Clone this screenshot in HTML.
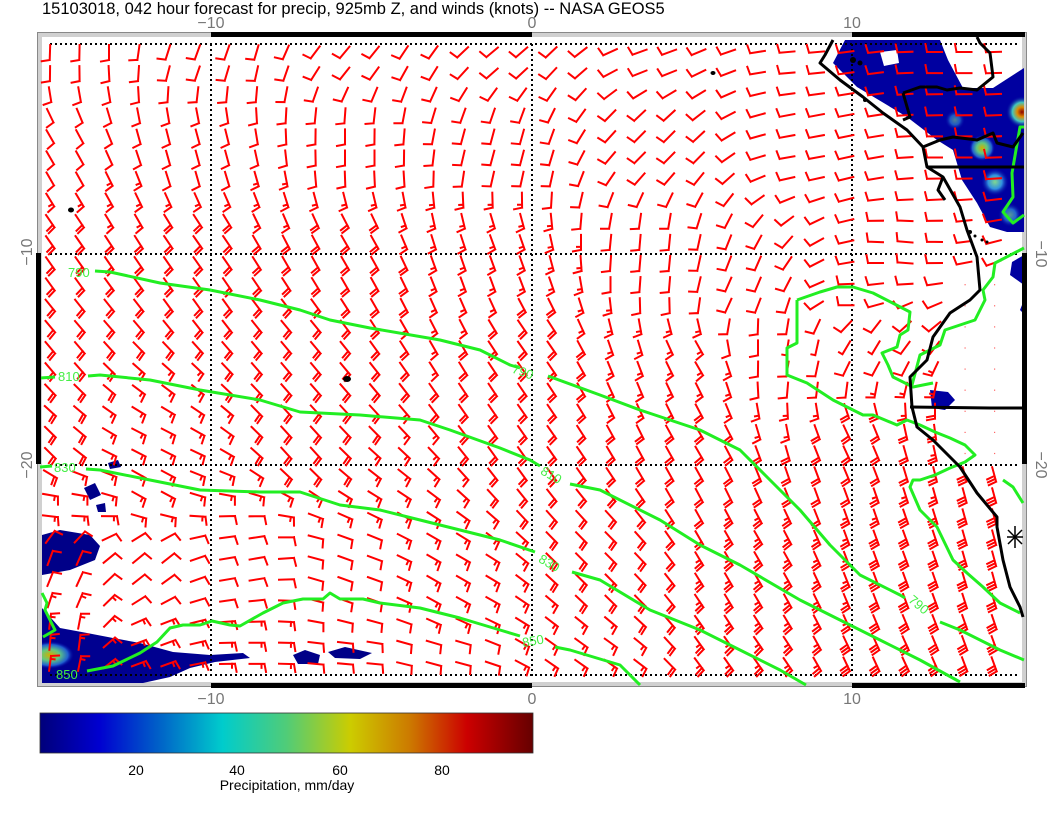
<!DOCTYPE html>
<html><head><meta charset="utf-8"><style>
html,body{margin:0;padding:0;background:#fff;width:1056px;height:816px;overflow:hidden}
svg{display:block}
text{font-family:"Liberation Sans",sans-serif}
</style></head><body>
<svg id="s" width="1056" height="816" viewBox="0 0 1056 816" xmlns="http://www.w3.org/2000/svg">
<defs>
<clipPath id="fr"><rect x="42" y="37" width="982" height="646"/></clipPath>
<linearGradient id="cb" x1="0" x2="1" y1="0" y2="0">
<stop offset="0" stop-color="#00007a"/><stop offset="0.12" stop-color="#0000d0"/><stop offset="0.24" stop-color="#0060c8"/><stop offset="0.37" stop-color="#00cccc"/><stop offset="0.5" stop-color="#50cc78"/><stop offset="0.63" stop-color="#cccc00"/><stop offset="0.75" stop-color="#cc7a00"/><stop offset="0.866" stop-color="#cc0000"/><stop offset="1" stop-color="#660000"/>
</linearGradient>
<radialGradient id="hot"><stop offset="0" stop-color="#8a0000"/><stop offset="0.3" stop-color="#dd8800"/><stop offset="0.6" stop-color="#40c8c0"/><stop offset="1" stop-color="#0000a0" stop-opacity="0"/></radialGradient>
<radialGradient id="yel"><stop offset="0" stop-color="#d0b000"/><stop offset="0.4" stop-color="#60c880"/><stop offset="0.75" stop-color="#2060d0"/><stop offset="1" stop-color="#0000a0" stop-opacity="0"/></radialGradient>
<radialGradient id="cy"><stop offset="0" stop-color="#80d890"/><stop offset="0.5" stop-color="#3090e0"/><stop offset="1" stop-color="#0000a0" stop-opacity="0"/></radialGradient>
</defs>
<text x="42" y="14" font-size="16.5" fill="#000">15103018, 042 hour forecast for precip, 925mb Z, and winds (knots) -- NASA GEOS5</text>
<rect x="37.5" y="32.5" width="989" height="654" fill="#fff" stroke="#888" stroke-width="1"/>
<rect x="40" y="35" width="984" height="649" fill="none" stroke="#d0d0d0" stroke-width="4"/>
<g clip-path="url(#fr)">
<path d="M833,63 L845,40 L940,40 L948,60 L963,88 L993,88 L1024,68 L1024,232 L1007,232 L990,227 L977,203 L962,180 L953,150 L937,140 L907,117 L857,87 Z" fill="#0000a0"/>
<path d="M880,52 L897,50 L899,63 L884,66 Z" fill="#fff"/>
<circle cx="1022" cy="112" r="16" fill="url(#hot)"/>
<circle cx="982" cy="148" r="13" fill="url(#yel)"/>
<circle cx="995" cy="182" r="14" fill="url(#cy)"/>
<circle cx="955" cy="120" r="10" fill="url(#cy)" opacity=".6"/>
<circle cx="1010" cy="215" r="12" fill="url(#cy)" opacity=".7"/>
<path d="M1024,255 L1012,262 L1010,275 L1024,285 Z" fill="#0000a0"/>
<path d="M1024,300 L1020,310 L1024,314 Z" fill="#0000a0"/>
<path d="M930,390 L948,392 L955,400 L945,410 L932,408 Z" fill="#0000a0"/>
<path d="M42,535 L60,530 L90,535 L100,546 L95,560 L70,570 L42,575 Z" fill="#000088"/>
<path d="M42,608 L60,628 L87,633 L113,638 L140,643 L173,652 L210,655 L243,653 L250,658 L215,662 L190,668 L170,677 L143,683 L42,683 Z" fill="#000090"/>
<ellipse cx="50" cy="655" rx="24" ry="14" fill="url(#yel)"/>
<path d="M293,655 L305,650 L320,655 L318,664 L298,664 Z" fill="#000088"/>
<path d="M328,652 L345,647 L372,653 L360,659 L335,658 Z" fill="#000088"/>
<path d="M108,463 L118,460 L121,467 L110,469 Z" fill="#000088"/>
<path d="M84,488 L95,483 L101,495 L90,500 Z" fill="#000088"/>
<path d="M96,505 L105,503 L106,512 L98,512 Z" fill="#000088"/>
</g>
<g stroke="#000" stroke-width="2" stroke-dasharray="2 3" fill="none">
<line x1="211" y1="44" x2="211" y2="676"/><line x1="532" y1="44" x2="532" y2="676"/><line x1="852" y1="44" x2="852" y2="676"/>
<line x1="50" y1="44" x2="1020" y2="44"/><line x1="50" y1="254" x2="1020" y2="254"/><line x1="50" y1="465" x2="1020" y2="465"/><line x1="50" y1="675" x2="1020" y2="675"/>
</g>
<g id="barbs" stroke="#ff0000" stroke-width="2" fill="none" stroke-linecap="square"></g>
<g stroke="#22ee22" stroke-width="3" fill="none" stroke-linejoin="round">
<polyline points="95,271 110,272 160,283 210,290 260,300 300,310 330,320 370,328 440,340 480,350 510,365 520,368"/>
<polyline points="548,376 600,395 640,410 700,430 740,450 770,480 800,510 830,545 860,575 900,595 905,598"/>
<polyline points="940,622 960,630 1000,650 1024,660"/>
<polyline points="40,378 55,377"/>
<polyline points="88,376 100,375 150,380 200,390 260,400 300,412 360,415 420,420 450,430 500,448 530,460 540,466"/>
<polyline points="570,484 600,490 660,520 700,545 740,565 800,600 840,620 880,640 920,660 960,682"/>
<polyline points="40,467 52,466"/>
<polyline points="86,469 100,470 150,480 200,490 260,492 300,492 340,505 380,510 420,520 460,530 500,540 535,552"/>
<polyline points="572,572 600,580 650,610 700,630 740,650 780,670 806,685"/>
<polyline points="87,671 113,666 140,653 157,642 170,628 183,625 200,625 212,621 230,625 240,626 263,613 283,603 303,599 323,599 330,593 340,599 363,599 380,603 420,608 460,618 500,630 520,636"/>
<polyline points="555,647 570,650 620,665 640,685"/>
<polyline points="42,593 47,603 45,610 50,620 55,630 43,637"/>
<polyline points="797,300 820,292 837,287 853,287 873,293 910,312 908,330 900,335 897,347 882,353 888,365 893,377 913,387 933,383"/>
<polyline points="797,300 797,343 787,348 787,375 807,383 833,400 863,415 873,415 897,425 907,420 920,425 935,432 950,438 965,445 975,455 965,462 950,468 935,475 920,480 913,480 910,487 920,510 937,527 953,560 967,573 983,587 1000,603 1020,613"/>
<polyline points="1003,480 1013,487 1023,503"/>
<polyline points="1024,248 995,263 993,277 983,290 985,300 975,320 960,325 945,330 940,345 920,355 912,385"/>
<polyline points="1024,127 1020,127 1012,173 1013,197 1003,212 1013,223 1024,215"/>
</g>
<g fill="#44ee44" font-size="13">
<text x="68" y="277">790</text><text x="512" y="377" transform="rotate(20 525 372)">790</text>
<text x="908" y="610" transform="rotate(40 920 605)">790</text>
<text x="58" y="381">810</text><text x="540" y="480" transform="rotate(30 552 476)">810</text>
<text x="54" y="472">830</text><text x="538" y="568" transform="rotate(30 550 564)">830</text>
<text x="522" y="645" transform="rotate(-10 535 640)">850</text><text x="56" y="679">850</text>
</g>
<g stroke="#000" stroke-width="3" fill="none" stroke-linejoin="round">
<polyline points="833,40 825,55 820,63 840,80 863,97 883,113 907,130 923,147 927,167 943,177 960,207 967,230 977,257 980,290 970,300 950,313 933,337 927,360 910,377 912,407 917,427 933,440 960,467 977,493 997,517 997,527 1003,560 1010,587 1020,607 1023,617"/>
<polyline points="903,93 920,87 937,87 947,90 960,88 977,90 993,77 990,53 980,43 977,37"/>
<polyline points="903,93 910,117 903,120"/>
<polyline points="923,147 940,140 953,137 977,140 993,133 997,143 1013,147 1023,133"/>
<polyline points="927,167 1024,167"/>
<polyline points="910,407 990,408 1024,408"/>
<polyline points="943,177 938,190 945,200"/>
</g>
<g fill="#000">
<ellipse cx="71" cy="210" rx="3" ry="2.5"/><ellipse cx="347" cy="379" rx="4" ry="3"/><ellipse cx="713" cy="73" rx="2.5" ry="2"/>
<circle cx="853" cy="60" r="3"/><circle cx="860" cy="63" r="2.5"/><circle cx="865" cy="100" r="2"/><circle cx="970" cy="232" r="2"/><circle cx="975" cy="236" r="1.5"/><circle cx="982" cy="240" r="1.5"/><circle cx="987" cy="242" r="1.5"/>
</g>
<g stroke="#000" stroke-width="1.5"><line x1="1007" y1="537" x2="1023" y2="537"/><line x1="1015" y1="526" x2="1015" y2="548"/><line x1="1008" y1="530" x2="1022" y2="544"/><line x1="1008" y1="544" x2="1022" y2="530"/></g>
<g fill="#000">
<rect x="211" y="32" width="321" height="5"/><rect x="852" y="32" width="173" height="5"/>
<rect x="211" y="683" width="321" height="5"/><rect x="852" y="683" width="173" height="5"/>
<rect x="36" y="253" width="5" height="211"/><rect x="1022" y="253" width="5" height="211"/>
</g>
<g fill="#777" font-size="16" text-anchor="middle">
<text x="211" y="28">−10</text><text x="532" y="28">0</text><text x="852" y="28">10</text>
<text x="211" y="704">−10</text><text x="532" y="704">0</text><text x="852" y="704">10</text>
<text transform="translate(32 252) rotate(-90)">−10</text><text transform="translate(32 465) rotate(-90)">−20</text>
<text transform="translate(1036 254) rotate(90)">−10</text><text transform="translate(1036 465) rotate(90)">−20</text>
</g>
<rect x="40" y="713" width="493" height="40" fill="url(#cb)" stroke="#333" stroke-width="0.8"/>
<g font-size="14" text-anchor="middle" fill="#000">
<text x="136" y="775">20</text><text x="237" y="775">40</text><text x="340" y="775">60</text><text x="442" y="775">80</text>
<text x="287" y="790">Precipitation, mm/day</text>
</g>
</svg>
<script>
var P=[[50,50,92,1],[200,50,110,1],[350,50,130,1],[500,50,140,1],[650,50,160,1],[800,60,175,1],[950,60,180,1],
[50,150,60,1],[200,150,75,1],[350,150,90,1],[500,150,105,1],[650,150,135,1],[800,150,170,1],[950,150,180,1],
[50,250,55,2],[200,250,55,2],[350,250,60,2],[500,250,70,1.5],[650,250,95,1],[740,300,115,1],[760,340,90,1],[850,300,180,1],[900,250,185,1],
[50,350,50,2],[300,350,50,2],[530,350,55,2],[700,360,60,1.5],[800,350,100,0.7],[860,340,120,0.7],
[50,450,45,2],[300,440,48,2],[530,440,55,2],[700,440,60,2],[850,440,65,2],
[60,500,10,1.5],[150,490,30,1.5],
[60,560,-70,1],[60,640,-85,1.5],[150,560,-40,1],[150,650,-20,1.5],[250,560,-10,1],[250,660,0,1.5],[350,580,20,1],[350,670,5,1],[450,580,30,1.5],[450,670,15,1],[600,560,45,2],[600,670,35,1.5],[750,560,60,2.5],[750,670,55,2.5],[900,560,70,3],[900,670,65,3],[1000,560,75,3],[1000,670,70,3],[1000,480,75,3]];
var g=document.getElementById('barbs'),h='';
for(var r=0;r<30;r++){for(var c=0;c<33;c++){
 var x=50+c*29.5,y=52+r*21.1;
 if(x>935&&y>265&&y<470){h+='<rect x="'+x.toFixed(1)+'" y="'+y.toFixed(1)+'" width="1.2" height="1.2" fill="#f66" stroke="none"/>';continue;}
 var sx=0,sy=0,sp=0,ws=0;
 for(var i=0;i<P.length;i++){var dx=x-P[i][0],dy=y-P[i][1],d=dx*dx+dy*dy+1,w=1/(d*Math.sqrt(d));var a=P[i][2]*Math.PI/180;sx+=w*Math.cos(a);sy+=w*Math.sin(a);sp+=w*P[i][3];ws+=w;}
 var L=Math.sqrt(sx*sx+sy*sy)||1,ux=sx/L,uy=sy/L;sp/=ws;
 var len=15,bx=x-ux*7,by=y-uy*7,tx=bx+ux*len,ty=by+uy*len;
 var d='M'+bx.toFixed(1)+' '+by.toFixed(1)+'L'+tx.toFixed(1)+' '+ty.toFixed(1);
 var px=-uy,py=ux,n=Math.floor(sp+0.25),half=(sp-n)>=0.25&&(sp-n)<0.75;
 if(n<1&&!half)n=1;
 for(var k=0;k<n;k++){var fx=tx-ux*3*k,fy=ty-uy*3*k;d+='M'+fx.toFixed(1)+' '+fy.toFixed(1)+'l'+(px*8+ux*1.5).toFixed(1)+' '+(py*8+uy*1.5).toFixed(1);}
 if(half){var fx=tx-ux*3*n,fy=ty-uy*3*n;d+='M'+fx.toFixed(1)+' '+fy.toFixed(1)+'l'+(px*4).toFixed(1)+' '+(py*4).toFixed(1);}
 h+='<path d="'+d+'"/>';
}}
g.innerHTML=h;
</script>
</body></html>
